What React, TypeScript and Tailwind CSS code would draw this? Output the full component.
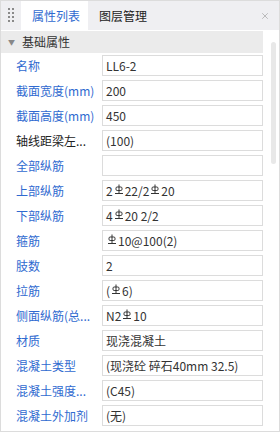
import { X } from 'lucide-react';

// 三级钢筋符号
function Gj() {
  return (
    <svg width="10" height="11" viewBox="0 0 10 11" className="inline-block mx-[1px] -mt-[2px] align-middle">
      <path d="M5 0.5V9.5" stroke="#333" strokeWidth="1" fill="none" />
      <rect x="2" y="3" width="6" height="3.5" rx="1.2" stroke="#333" strokeWidth="1" fill="none" />
      <path d="M1 9.5H9" stroke="#333" strokeWidth="1" fill="none" />
    </svg>
  );
}

type Row = { label: string; value: React.ReactNode; black?: boolean };

const rows: Row[] = [
  { label: '名称', value: 'LL6-2' },
  { label: '截面宽度(mm)', value: '200' },
  { label: '截面高度(mm)', value: '450' },
  { label: '轴线距梁左...', value: '(100)', black: true },
  { label: '全部纵筋', value: '' },
  { label: '上部纵筋', value: <>2<Gj />22/2<Gj />20</> },
  { label: '下部纵筋', value: <>4<Gj />20 2/2</> },
  { label: '箍筋', value: <><Gj />10@100(2)</> },
  { label: '肢数', value: '2' },
  { label: '拉筋', value: <>(<Gj />6)</> },
  { label: '侧面纵筋(总...', value: <>N2<Gj />10</> },
  { label: '材质', value: '现浇混凝土' },
  { label: '混凝土类型', value: '(现浇砼 碎石40mm 32.5)' },
  { label: '混凝土强度...', value: '(C45)' },
  { label: '混凝土外加剂', value: '(无)' },
];

export default function App() {
  return (
    <div
      className="w-[280px] h-[432px] border border-[#dcdcdc] bg-white flex flex-col overflow-hidden text-[12px] text-[#333]"
      style={{ fontFamily: '"Noto Sans CJK SC", "Noto Sans", sans-serif' }}
    >
      {/* 标签栏 */}
      <div className="h-[29px] shrink-0 bg-[#efeff2] flex items-stretch">
        <div className="w-[20px] flex items-center justify-center">
          <div className="grid grid-cols-2 gap-x-[2px] gap-y-[2px] mt-[-1px]">
            {Array.from({ length: 8 }).map((_, i) => (
              <span key={i} className="w-[2px] h-[2px] bg-[#8a8a8a]" />
            ))}
          </div>
        </div>
        <div className="bg-white px-[11px] pr-[8px] flex items-center text-[#2f6ad0]">属性列表</div>
        <div className="px-[11px] flex items-center text-[#222]">图层管理</div>
        <div className="flex-1" />
        <div className="w-[28px] flex items-center justify-center">
          <X className="w-[10px] h-[10px] text-[#9a9a9a]" strokeWidth={1.5} />
        </div>
      </div>

      <div className="flex flex-1 pt-[1px]">
        <div className="w-[262px] flex flex-col">
          {/* 分组标题 */}
          <div className="h-[22px] bg-[#ebebeb] flex items-center">
            <span className="w-[21px] text-center text-[7px] text-[#888] mt-[1px]">▼</span>
            <span className="text-[#333]">基础属性</span>
          </div>
          <div className="pt-[2px]">
            {rows.map((r) => (
              <div key={r.label} className="h-[25px] flex items-start">
                <div
                  className={`w-[101px] h-[21px] pl-[15px] flex items-center whitespace-nowrap ${
                    r.black ? 'text-[#222]' : 'text-[#2f6ad0]'
                  }`}
                >
                  {r.label}
                </div>
                <div className="flex-1 h-[21px] border border-[#dcdcdc] bg-white flex items-center px-[3px] whitespace-nowrap overflow-hidden">
                  {r.value}
                </div>
              </div>
            ))}
          </div>
        </div>
        {/* 滚动条 */}
        <div className="flex-1 pl-[8px] pt-[11px]">
          <div className="w-[5px] h-[122px] rounded-full bg-[#e8e8e8]" />
        </div>
      </div>
    </div>
  );
}
